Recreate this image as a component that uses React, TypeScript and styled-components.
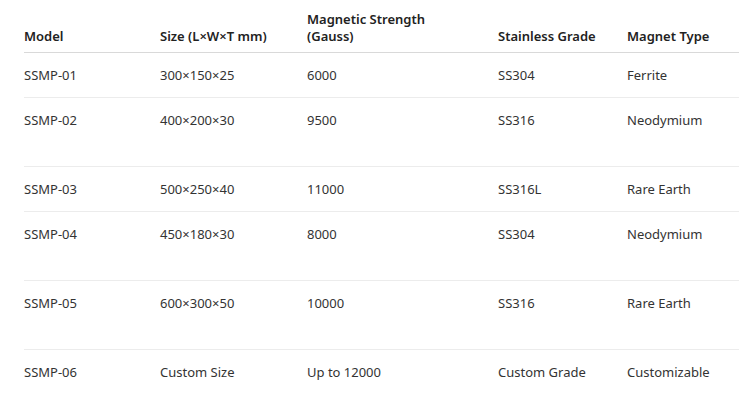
import styled, { createGlobalStyle } from "styled-components";

const GlobalStyle = createGlobalStyle`
  body {
    margin: 0;
    background: #fff;
    font-family: "Noto Sans", "Open Sans", sans-serif;
  }
`;

type Row = {
  model: string;
  size: string;
  strength: string;
  grade: string;
  type: string;
  tall?: boolean;
};

const rows: Row[] = [
  { model: "SSMP-01", size: "300×150×25", strength: "6000", grade: "SS304", type: "Ferrite" },
  { model: "SSMP-02", size: "400×200×30", strength: "9500", grade: "SS316", type: "Neodymium", tall: true },
  { model: "SSMP-03", size: "500×250×40", strength: "11000", grade: "SS316L", type: "Rare Earth" },
  { model: "SSMP-04", size: "450×180×30", strength: "8000", grade: "SS304", type: "Neodymium", tall: true },
  { model: "SSMP-05", size: "600×300×50", strength: "10000", grade: "SS316", type: "Rare Earth", tall: true },
  { model: "SSMP-06", size: "Custom Size", strength: "Up to 12000", grade: "Custom Grade", type: "Customizable", tall: true },
];

const widths = [136, 147, 191, 129, 112];

const App = () => {
  return (
    <>
      <GlobalStyle />
      <Wrap>
        <Table>
          <colgroup>
            {widths.map((w, i) => (
              <col key={i} style={{ width: w }} />
            ))}
          </colgroup>
          <thead>
            <tr>
              <Th>Model</Th>
              <Th>Size (L×W×T mm)</Th>
              <Th>
                Magnetic Strength
                <br />
                (Gauss)
              </Th>
              <Th>Stainless Grade</Th>
              <Th>Magnet Type</Th>
            </tr>
          </thead>
          <tbody>
            {rows.map((row) => (
              <Tr key={row.model}>
                <Td $tall={row.tall}>{row.model}</Td>
                <Td $tall={row.tall}>{row.size}</Td>
                <Td $tall={row.tall}>{row.strength}</Td>
                <Td $tall={row.tall}>{row.grade}</Td>
                <Td $tall={row.tall}>{row.type}</Td>
              </Tr>
            ))}
          </tbody>
        </Table>
      </Wrap>
    </>
  );
};

const Wrap = styled.div`
  padding-left: 24px;
  overflow: hidden;
`;

const Table = styled.table`
  width: 715px;
  table-layout: fixed;
  border-collapse: collapse;
  font-size: 13px;
  line-height: 17px;
`;

const Th = styled.th`
  text-align: left;
  vertical-align: bottom;
  font-weight: 600;
  color: #222;
  padding: 11px 0 7px;
  border-bottom: 1px solid #d9d9d9;
`;

const Tr = styled.tr`
  & + & td {
    border-top: 1px solid #ececec;
  }
`;

const Td = styled.td<{ $tall?: boolean }>`
  vertical-align: top;
  color: #333;
  padding: 14px 0 ${(p) => (p.$tall ? 37 : 13)}px;
  white-space: nowrap;
`;

export default App;
